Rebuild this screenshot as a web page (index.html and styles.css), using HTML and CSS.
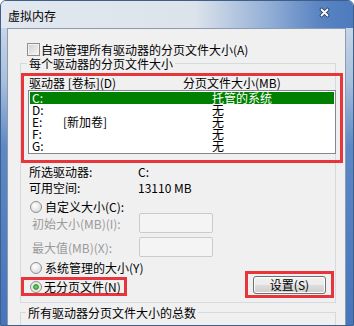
FILE: index.html
```html
<!DOCTYPE html>
<html>
<head>
	<meta charset="utf-8">
	<link rel="stylesheet" href="styles.css">
	<title>虚拟内存</title>
</head>
<body>
	<div class="window">
		<div class="titlebar">
			<span class="title">虚拟内存</span>
			<svg class="close" width="11" height="11" viewBox="0 0 11 11">
				<path d="M2.5 2.5 L8.5 8.5 M8.5 2.5 L2.5 8.5" stroke="#2b4264" stroke-width="3.6" stroke-linecap="round"/>
				<path d="M2.5 2.5 L8.5 8.5 M8.5 2.5 L2.5 8.5" stroke="#ffffff" stroke-width="1.8" stroke-linecap="round"/>
			</svg>
		</div>
		<div class="panel">
			<div class="auto">
				<span class="check"></span>
				<span>自动管理所有驱动器的分页文件大小(A)</span>
			</div>

			<fieldset class="group">
				<legend>每个驱动器的分页文件大小</legend>

				<div class="mark drives">
					<div class="head">
						<span>驱动器 [卷标](D)</span>
						<span>分页文件大小(MB)</span>
					</div>
					<div class="list">
						<div class="row selected"><span>C:</span><span></span><span>托管的系统</span></div>
						<div class="row"><span>D:</span><span></span><span>无</span></div>
						<div class="row"><span>E:</span><span>[新加卷]</span><span>无</span></div>
						<div class="row"><span>F:</span><span></span><span>无</span></div>
						<div class="row"><span>G:</span><span></span><span>无</span></div>
					</div>
				</div>

				<div class="info">
					<span>所选驱动器:</span><span>C:</span>
					<span>可用空间:</span><span>13110 MB</span>
				</div>

				<div class="option custom">
					<span class="radio"></span>
					<span>自定义大小(C):</span>
				</div>
				<div class="field">
					<span>初始大小(MB)(I):</span>
					<span class="input"></span>
				</div>
				<div class="field">
					<span>最大值(MB)(X):</span>
					<span class="input"></span>
				</div>

				<div class="bottom">
					<div class="choices">
						<div class="option">
							<span class="radio"></span>
							<span>系统管理的大小(Y)</span>
						</div>
						<div class="mark nofile">
							<span class="radio on"></span>
							<span>无分页文件(N)</span>
						</div>
					</div>
					<div class="mark setbox">
						<button class="btn">设置(S)</button>
					</div>
				</div>
			</fieldset>

			<fieldset class="group total">
				<legend>所有驱动器分页文件大小的总数</legend>
				<div class="spacer"></div>
			</fieldset>
		</div>
	</div>
</body>
</html>
```

FILE: styles.css
```css
html, body {
	margin: 0;
	padding: 0;
	background: #ffffff;
}
body {
	font-family: "Noto Sans CJK SC", "Liberation Sans", sans-serif;
	font-size: 12px;
	color: #000;
}
.window {
	width: 354px;
	height: 326px;
	box-sizing: border-box;
	border: 1px solid #3f5f88;
	border-radius: 6px 6px 0 0;
	overflow: hidden;
	display: flex;
	flex-direction: column;
	background: linear-gradient(180deg, #d6e0ec 0%, #a8bfdc 25%, #5d88c5 45%, #4775bb 100%);
}
.titlebar {
	height: 27px;
	flex: none;
	display: flex;
	align-items: center;
	justify-content: space-between;
	background: linear-gradient(90deg, #e2e8ef 0%, #dce3eb 55%, #93afd6 76%, #5b85c3 90%, #4d7bbf 100%);
}
.title {
	padding-left: 7px;
	padding-top: 2px;
	line-height: 13px;
}
.close {
	margin-right: 23px;
	margin-top: -5px;
}
.panel {
	flex: 1;
	margin: 0 7px 0 6px;
	border: 1px solid #8a9bb2;
	border-bottom: none;
	background: #f0f0f0;
	overflow: hidden;
}
.auto {
	margin-top: 14px;
	padding-left: 19px;
	height: 13px;
	line-height: 13px;
	display: flex;
	align-items: center;
	gap: 1px;
}
.check {
	width: 13px;
	height: 13px;
	box-sizing: border-box;
	border: 1px solid #8e8f8f;
	background: linear-gradient(135deg, #cfcfcf, #f8f8f8);
	box-shadow: inset 0 0 0 1px #f2f2f2;
}

.group {
	margin: 1px 0 0 12px;
	padding: 0 0 4px 0;
	width: 316px;
	min-width: 0;
	box-sizing: border-box;
	border: 1px solid #d5dadf;
}
.group legend {
	margin-left: 6px;
	padding: 0 2px;
	line-height: 13px;
}
.total {
	margin-top: 3px;
}
.total legend {
	margin-left: 5px;
}
.spacer {
	height: 30px;
}

.mark {
	border: 3px solid #e8343b;
	box-sizing: border-box;
}
.drives {
	margin-top: 3px;
	width: 322px;
	padding-bottom: 6px;
}
.head {
	display: grid;
	grid-template-columns: 154px 1fr;
	padding-left: 5px;
	line-height: 13px;
	height: 13px;
}
.list {
	margin: 1px 0 0 4px;
	width: 308px;
	height: 64px;
	box-sizing: border-box;
	border: 1px solid #828790;
	background: #fff;
	padding: 1px;
}
.row {
	display: grid;
	grid-template-columns: 31px 149px 1fr;
	padding-left: 2px;
	height: 12px;
	line-height: 12px;
}
.row.selected {
	background: #008000;
	color: #fff;
}

.info {
	margin-top: 1px;
	padding-left: 8px;
	display: grid;
	grid-template-columns: 109px 1fr;
	line-height: 16px;
}

.option {
	display: flex;
	align-items: center;
	gap: 3px;
	padding-left: 9px;
	height: 12px;
	line-height: 12px;
}
.custom {
	margin-top: 5px;
	height: 12px;
}
.radio {
	width: 12px;
	height: 12px;
	flex: none;
	box-sizing: border-box;
	border-radius: 50%;
	border: 1px solid #8e8f8f;
	background: radial-gradient(circle at 40% 35%, #ffffff 0%, #e4e4e4 60%, #cfcfcf 100%);
}
.radio.on {
	background: radial-gradient(circle at 50% 50%, #7ae07a 0, #2a9d2a 2.4px, #e6e6e6 3.2px, #f7f7f7 100%);
}

.field {
	display: grid;
	grid-template-columns: 107px 74px;
	align-items: center;
	padding-left: 11px;
	height: 20px;
	color: #9a9a9a;
	margin-bottom: 4px;
}
.input {
	height: 20px;
	box-sizing: border-box;
	border: 1px solid #cbcbcb;
	border-radius: 2px;
	background: #f4f4f4;
}

.bottom {
	margin-top: 5px;
	display: flex;
	justify-content: space-between;
}
.choices {
	padding-bottom: 2px;
}
.nofile {
	margin-top: 3px;
	width: 106px;
	height: 19px;
	display: flex;
	align-items: center;
	gap: 2px;
	padding-left: 6px;
	line-height: 12px;
}
.setbox {
	align-self: flex-end;
	width: 89px;
	height: 27px;
	margin-right: 1px;
	display: flex;
	align-items: center;
	justify-content: center;
}
.btn {
	width: 73px;
	height: 18px;
	padding: 0;
	font: inherit;
	line-height: 14px;
	border: 1px solid #707070;
	border-radius: 3px;
	background: linear-gradient(180deg, #f2f2f2 0%, #ebebeb 50%, #dddddd 51%, #cfcfcf 100%);
	box-shadow: inset 0 0 0 1px #fcfcfc;
}
```
